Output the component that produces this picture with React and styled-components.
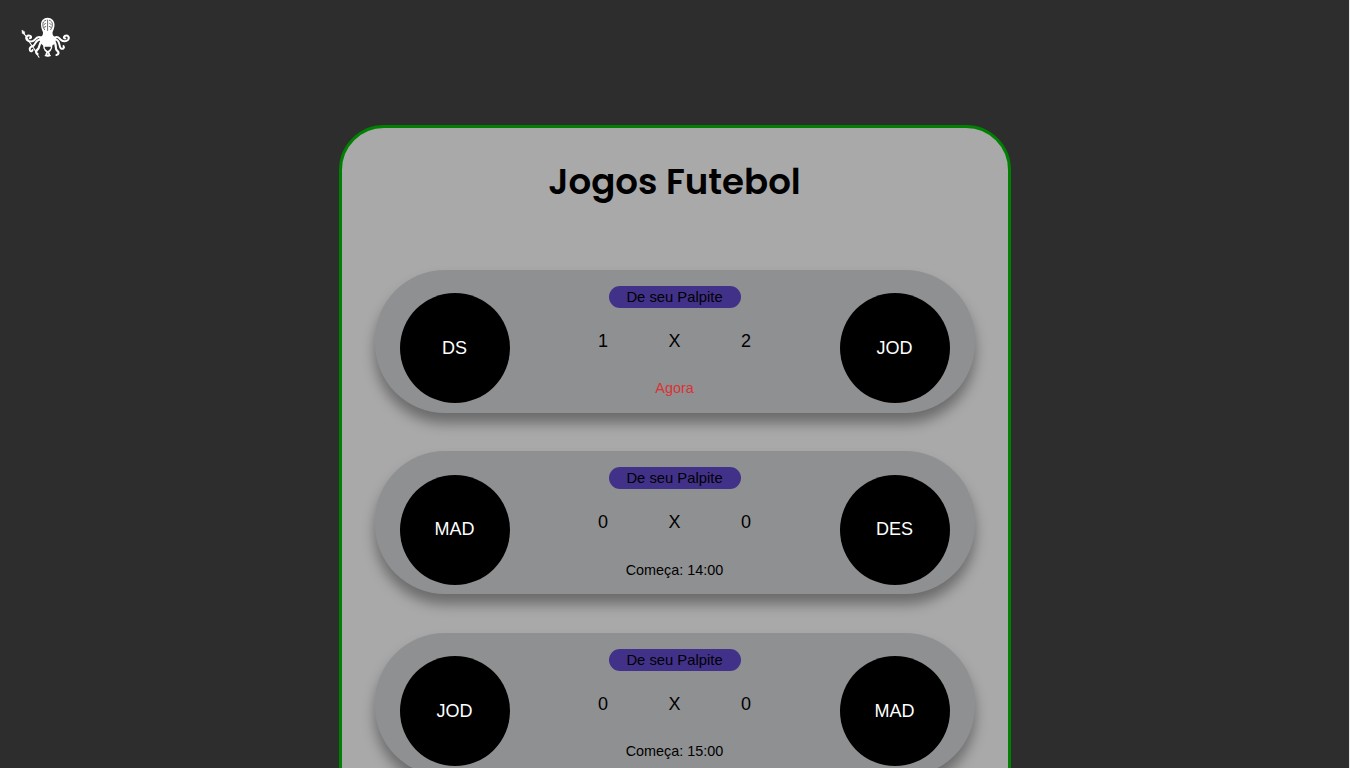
import React from 'react';
import styled, { createGlobalStyle } from 'styled-components';

const GlobalStyle = createGlobalStyle`
  * { box-sizing: border-box; }
  body {
    margin: 0;
    background: #2d2d2d;
    font-family: "Liberation Sans", Arial, sans-serif;
    color: #000;
  }
`;

const Page = styled.div`
  height: 768px;
  overflow: hidden;
  border-right: 1px solid #e8e8e8;
`;

const Header = styled.header`
  height: 125px;
  padding: 17px 0 0 21px;
`;

const Logo = styled.svg`
  display: block;
  width: 50px;
  height: 42px;
`;

const Panel = styled.main`
  width: 672px;
  height: 900px;
  margin: 0 auto;
  border: 3px solid #008000;
  border-radius: 45px;
  background: #a9a9a9;
`;

const Title = styled.h1`
  margin: 0;
  height: 142px;
  padding-top: 33px;
  text-align: center;
  font-family: Poppins, Inter, sans-serif;
  font-size: 35.6px;
  font-weight: 600;
  line-height: 42px;
  white-space: nowrap;
`;

const GameList = styled.section`
  display: flex;
  flex-direction: column;
  align-items: center;
  gap: 38.4px;
`;

const GameCard = styled.article`
  display: flex;
  justify-content: space-between;
  width: 600px;
  height: 143px;
  padding: 23.3px 25px 0;
  border-radius: 70px;
  background: #8f9092;
  box-shadow: 0 10px 13px rgba(0, 0, 0, 0.37);
`;

const Team = styled.div`
  display: flex;
  align-items: center;
  justify-content: center;
  width: 110px;
  height: 110px;
  border-radius: 50%;
  background: #000;
  color: #fff;
  font-size: 18px;
`;

const Center = styled.div`
  display: flex;
  flex-direction: column;
  align-items: center;
  width: 155px;
  margin-top: -7.3px;
`;

const GuessButton = styled.button`
  width: 132px;
  height: 22px;
  padding: 0;
  border: 0;
  border-radius: 11px;
  background: #423189;
  color: #000;
  font-family: inherit;
  font-size: 14.8px;
  line-height: 22px;
`;

const Score = styled.div`
  display: grid;
  grid-template-columns: 11px 1fr 11px;
  width: 154px;
  margin-top: 23px;
  font-size: 18px;
  line-height: 20px;
  text-align: center;
`;

const Status = styled.p`
  margin: 28.2px 0 0;
  font-size: 14.4px;
  line-height: 18px;
  color: ${({ $live }) => ($live ? '#dc3232' : '#000')};
`;

const games = [
  { home: 'DS', away: 'JOD', score: [1, 2], status: 'Agora', live: true },
  { home: 'MAD', away: 'DES', score: [0, 0], status: 'Começa: 14:00' },
  { home: 'JOD', away: 'MAD', score: [0, 0], status: 'Começa: 15:00' },
];

function OctopusLogo() {
  return (
    <Logo viewBox="0 0 50 42" fill="none" stroke="#fff" strokeLinecap="round" strokeLinejoin="round">
      <path d="M26.600.8c-4 0-6.600 3-6.600 7 0 3 1 5 2 7.500.2 3-1 4.500-4 5l1.500 6 4 3.500h6.500l4-3.500 1.500-6c-3-.5-4.200-2-4-5 1-2.500 2-4.500 2-7.500 0-4-2.900-7-6.900-7z" fill="#fff" stroke="none" />
      <path d="M26.600 3v10.500M24.800 3.300c-2.200.7-3 2.200-3 4.200s.8 4 1.800 5.200M24.500 6.500l-1.500 1M24.800 9.500l-1.600.8M28.400 3.300c2.200.7 3 2.200 3 4.200s-.8 4-1.800 5.200M28.700 6.500l1.500 1M28.400 9.500l1.600.8" stroke="#2d2d2d" strokeWidth=".7" />
      <path d="M20 20.500c-3-1.500-5 .5-6.500 2.500-2 2-5.500 2-7.500 0-2-2.500.3-5.500 3.300-4.200 1.500 1 .8 2.600-.6 2.400M34 20.500c3-1.500 4 .5 5.500 2 2 2 5.500 2.500 7.500.3 2-2.500-.3-5.300-3.300-3.800-1.500 1-.8 2.600.6 2.400" strokeWidth="2" />
      <path d="M19 22.500c-5 .5-4 5-7 6.500-2.500.5-4 2.500-3 4.500.8 1.200 2.400.8 2.600-.4M34.500 22.500c5 .5 3 7 5.500 9 2 1 3.800-.8 2.500-2.500" strokeWidth="2" />
      <path d="M21 24c-4 3-1.500 6.500-4.500 8.500-2 1.500-1.500 3.800 0 4.500M32.500 24c4 3 1 8 3.500 9.500 2.200 1.500 2 4-.5 4.500" strokeWidth="2.200" />
      <path d="M24 27c-2.500 4-.5 6 2.500 8 3.500 2.500 1 4.500-2 3.500M29.500 27c2.500 4 .5 6-2.500 8-3.500 2.500-1 4.500 2 3.500" strokeWidth="1.700" />
      <path d="M1.500 14l1.300 2.700 2.200 2.500 3.500 6 5 7 2.500 5 2 3" strokeWidth="1.100" />
      <path d="M1 13.500l.3 3 2.200.6.2-2z" fill="#fff" strokeWidth=".5" />
    </Logo>
  );
}

export default function App() {
  return (
    <>
      <GlobalStyle />
      <Page>
        <Header><OctopusLogo /></Header>
        <Panel>
          <Title>Jogos Futebol</Title>
          <GameList>
            {games.map((game) => (
              <GameCard key={game.home}>
                <Team>{game.home}</Team>
                <Center>
                  <GuessButton>De seu Palpite</GuessButton>
                  <Score>
                    <span>{game.score[0]}</span>
                    <span>X</span>
                    <span>{game.score[1]}</span>
                  </Score>
                  <Status $live={game.live}>{game.status}</Status>
                </Center>
                <Team>{game.away}</Team>
              </GameCard>
            ))}
          </GameList>
        </Panel>
      </Page>
    </>
  );
}
